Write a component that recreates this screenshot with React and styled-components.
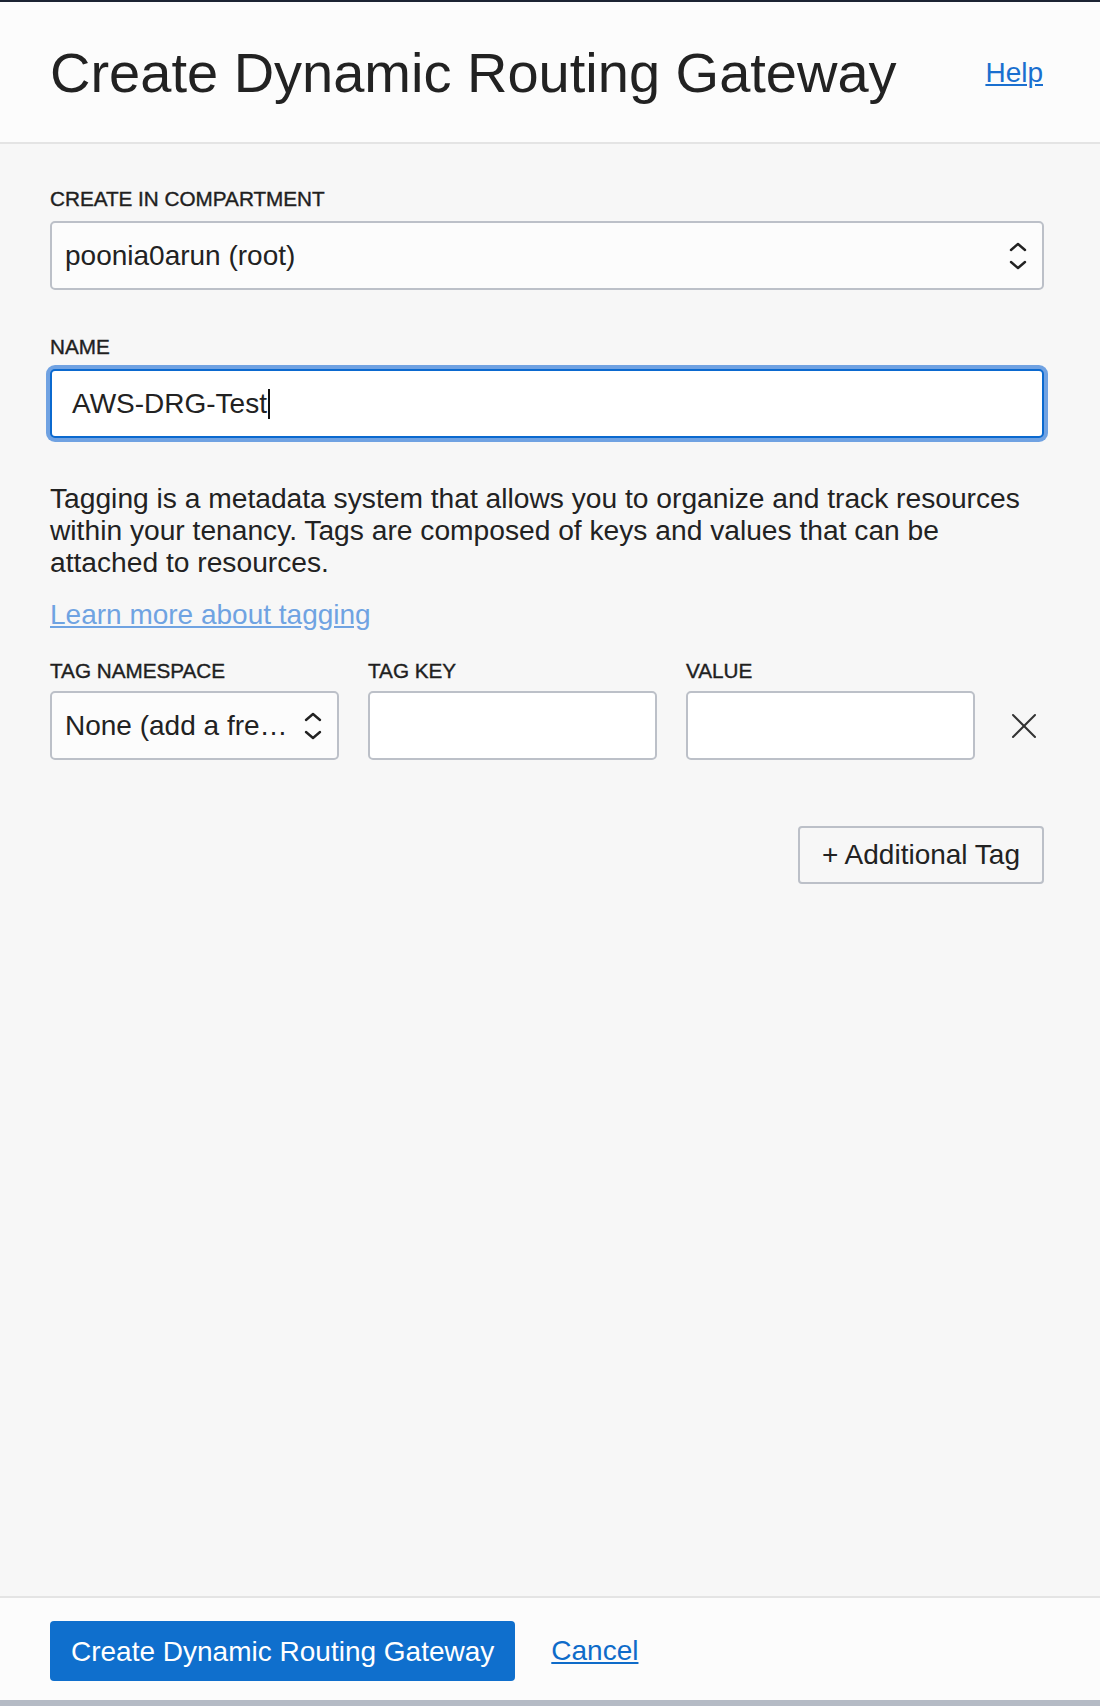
import React from 'react';
import styled, { createGlobalStyle } from 'styled-components';

const GlobalStyle = createGlobalStyle`
    html, body {
        margin: 0;
        padding: 0;
        background: #f7f7f7;
        font-family: "Liberation Sans", Arial, sans-serif;
        color: #222;
    }
    * {
        box-sizing: border-box;
    }
`;

const Page = styled.div`
    display: flex;
    flex-direction: column;
    min-height: 100vh;
    border-top: 2px solid #1c2433;
    border-bottom: 6px solid #b5bbc5;
`;

const Header = styled.header`
    display: flex;
    align-items: center;
    justify-content: space-between;
    height: 142px;
    padding: 2px 57px 0 50px;
    background: #fcfcfc;
    border-bottom: 2px solid #e4e4e4;
`;

const Title = styled.h1`
    margin: 0;
    font-size: 56px;
    font-weight: 400;
    line-height: 1.2;
    color: #222;
`;

const Link = styled.a`
    font-size: 28px;
    line-height: 32px;
    color: ${(p) => p.$color || '#1a6fcf'};
    text-decoration: underline;
    cursor: pointer;
`;

const Body = styled.main`
    flex: 1;
    display: flex;
    flex-direction: column;
    padding: 45px 56px 40px 50px;
`;

const Field = styled.div`
    display: flex;
    flex-direction: column;
    gap: ${(p) => p.$gap || 12}px;
    margin-top: ${(p) => p.$top || 0}px;
`;

const Label = styled.label`
    font-size: 20.7px;
    line-height: 20px;
    text-transform: uppercase;
    color: #1f1f1f;
    -webkit-text-stroke: 0.4px #1f1f1f;
`;

const Control = styled.div`
    display: flex;
    align-items: center;
    justify-content: space-between;
    height: 69px;
    padding: 0 15px 0 ${(p) => p.$padLeft || 13}px;
    font-size: 28px;
    color: #222;
    white-space: nowrap;
    overflow: hidden;
    border-radius: 5px;
    background: ${(p) => (p.$focused || p.$plain ? '#fff' : '#fcfcfc')};
    border: 2px solid ${(p) => (p.$focused ? '#0b69cf' : '#bcc0c8')};
    box-shadow: ${(p) => (p.$focused ? '0 0 0 4px #70a2e2' : 'none')};
`;

const Caret = styled.span`
    display: inline-block;
    width: 2px;
    height: 30px;
    margin-left: 1px;
    vertical-align: -6px;
    background: #111;
`;

const Paragraph = styled.p`
    margin: 44px 0 0;
    font-size: 28.2px;
    line-height: 32px;
    color: #222;
`;

const LinkRow = styled.div`
    margin-top: 21px;
`;

const TagGrid = styled.div`
    display: grid;
    grid-template-columns: repeat(3, 289px) 1fr;
    column-gap: 29px;
    margin-top: 30px;
`;

const RemoveCell = styled.div`
    align-self: end;
    height: 69px;
    display: flex;
    align-items: center;
    justify-content: center;
    color: #333;
`;

const ButtonRow = styled.div`
    display: flex;
    justify-content: flex-end;
    margin-top: 66px;
`;

const SecondaryButton = styled.button`
    height: 58px;
    padding: 0 22px;
    font-family: inherit;
    font-size: 28px;
    color: #222;
    background: #f7f7f7;
    border: 2px solid #bcc0c8;
    border-radius: 4px;
`;

const Footer = styled.footer`
    display: flex;
    align-items: center;
    gap: 36px;
    height: 104px;
    padding: 3px 50px 0;
    background: #fcfcfc;
    border-top: 2px solid #e4e4e4;
`;

const PrimaryButton = styled.button`
    height: 60px;
    padding: 2px 21px 0;
    font-family: inherit;
    font-size: 28px;
    color: #fff;
    background: #0f6fcd;
    border: none;
    border-radius: 4px;
`;

const Chevrons = () => (
    <svg width="18" height="30" viewBox="0 0 18 30" fill="none" stroke="#222" strokeWidth="2.4" strokeLinecap="round" strokeLinejoin="round">
        <polyline points="2,9 9,3 16,9" />
        <polyline points="2,21 9,27 16,21" />
    </svg>
);

const CloseIcon = () => (
    <svg width="26" height="26" viewBox="0 0 26 26" stroke="#333" strokeWidth="2" strokeLinecap="round">
        <line x1="2" y1="2" x2="24" y2="24" />
        <line x1="24" y1="2" x2="2" y2="24" />
    </svg>
);

const App = () => {
    return (
        <>
            <GlobalStyle />
            <Page>
                <Header>
                    <Title>Create Dynamic Routing Gateway</Title>
                    <Link>Help</Link>
                </Header>

                <Body>
                    <Field>
                        <Label>Create in Compartment</Label>
                        <Control>
                            <span>poonia0arun (root)</span>
                            <Chevrons />
                        </Control>
                    </Field>

                    <Field $top={47}>
                        <Label>Name</Label>
                        <Control $focused $padLeft={20}>
                            <span>AWS-DRG-Test<Caret /></span>
                        </Control>
                    </Field>

                    <Paragraph>
                        Tagging is a metadata system that allows you to organize and track resources within your tenancy. Tags are composed of keys and values that can be attached to resources.
                    </Paragraph>

                    <LinkRow>
                        <Link $color="#6fa3e2">Learn more about tagging</Link>
                    </LinkRow>

                    <TagGrid>
                        <Field $gap={10}>
                            <Label>Tag Namespace</Label>
                            <Control>
                                <span>None (add a fre…</span>
                                <Chevrons />
                            </Control>
                        </Field>
                        <Field $gap={10}>
                            <Label>Tag Key</Label>
                            <Control $plain />
                        </Field>
                        <Field $gap={10}>
                            <Label>Value</Label>
                            <Control $plain />
                        </Field>
                        <RemoveCell>
                            <CloseIcon />
                        </RemoveCell>
                    </TagGrid>

                    <ButtonRow>
                        <SecondaryButton>+ Additional Tag</SecondaryButton>
                    </ButtonRow>
                </Body>

                <Footer>
                    <PrimaryButton>Create Dynamic Routing Gateway</PrimaryButton>
                    <Link $color="#0e6bc9">Cancel</Link>
                </Footer>
            </Page>
        </>
    );
};

export default App;
